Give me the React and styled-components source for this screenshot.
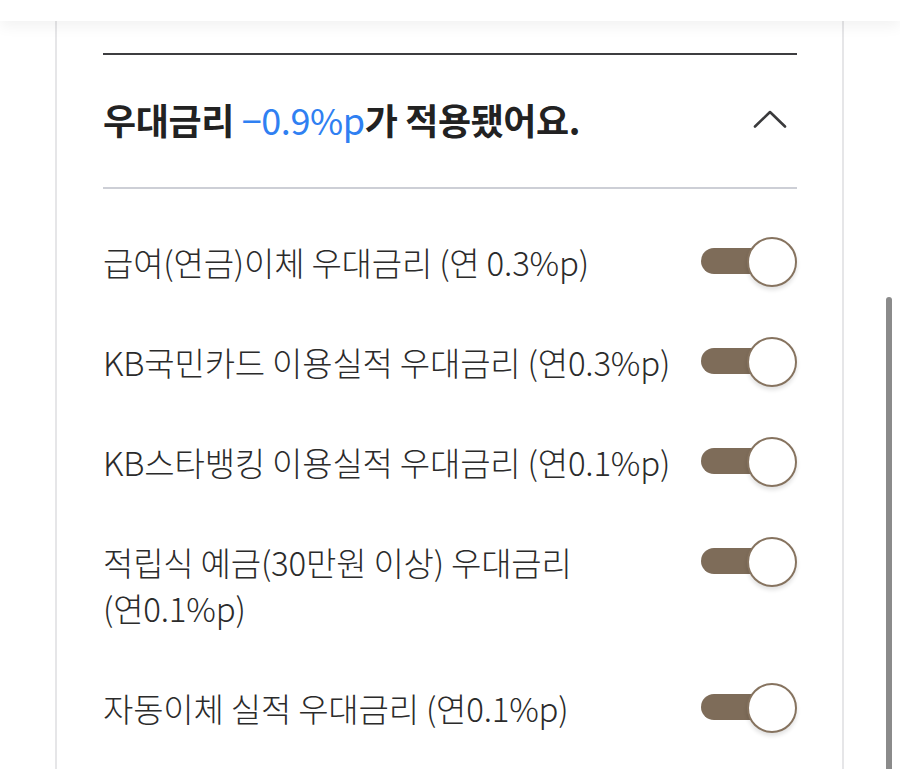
import React from "react";
import styled, { createGlobalStyle } from "styled-components";

const GlobalStyle = createGlobalStyle`
  html, body {
    margin: 0;
    padding: 0;
    background: #ffffff;
    overflow: hidden;
  }
  body {
    font-family: "Noto Sans CJK KR", "Noto Sans", sans-serif;
    color: #2a2a2a;
  }
`;

const TopBar = styled.header`
  position: relative;
  z-index: 2;
  height: 21px;
  background: #ffffff;
  box-shadow: 0 6px 14px rgba(0, 0, 0, 0.05);
`;

const Page = styled.main`
  display: flex;
  padding-left: 55px;
  padding-right: 56px;
  height: 748px;
`;

const Card = styled.section`
  flex: 1;
  border-left: 2px solid #e6e6e8;
  border-right: 2px solid #e6e6e8;
  background: #ffffff;
  padding: 32px 45px 0 46px;
  display: flex;
  flex-direction: column;
  & > * {
    flex: none;
  }
`;

const TopRule = styled.div`
  height: 2px;
  background: #3d3d40;
`;

const SummaryRow = styled.div`
  height: 134px;
  padding-bottom: 5px;
  display: flex;
  align-items: center;
  justify-content: space-between;
  border-bottom: 2px solid #cdcfd6;
  box-sizing: border-box;
`;

const SummaryTitle = styled.h2`
  margin: 0;
  font-size: 36px;
  font-weight: 700;
  color: #222222;
  letter-spacing: -0.4px;
`;

const Accent = styled.span`
  color: #2f80f2;
  font-weight: 400;
`;

const ChevronButton = styled.button`
  border: 0;
  background: none;
  padding: 0;
  margin-right: 9px;
  width: 36px;
  height: 24px;
  display: flex;
  align-items: center;
  justify-content: center;
`;

const List = styled.ul`
  list-style: none;
  margin: 0;
  padding: 50px 0 0;
  display: flex;
  flex-direction: column;
  gap: 54px;
`;

const Item = styled.li`
  display: flex;
  align-items: flex-start;
  justify-content: space-between;
  gap: 24px;
`;

const Label = styled.span`
  font-size: 33px;
  font-weight: 300;
  line-height: 46px;
  color: #2b2b2b;
  letter-spacing: -0.2px;
  word-break: keep-all;
  max-width: 580px;
`;

const Toggle = styled.button`
  position: relative;
  flex: none;
  width: 96px;
  height: 50px;
  margin: -2px 0;
  border: 0;
  padding: 0;
  background: none;
`;

const Track = styled.span`
  position: absolute;
  left: 0;
  top: 11px;
  width: 72px;
  height: 26px;
  border-radius: 13px;
  background: ${(p) => (p.$on ? "#7e6c59" : "#c9c9c9")};
`;

const Thumb = styled.span`
  position: absolute;
  top: 0;
  left: ${(p) => (p.$on ? "46px" : "0")};
  width: 50px;
  height: 50px;
  box-sizing: border-box;
  border-radius: 50%;
  background: #ffffff;
  border: 2px solid #86735f;
  box-shadow: 0 3px 4px rgba(0, 0, 0, 0.12);
`;

const ScrollIndicator = styled.div`
  position: fixed;
  right: 8px;
  top: 297px;
  width: 6px;
  height: 500px;
  border-radius: 3px;
  background: #8b8b8b;
`;

const items = [
  "급여(연금)이체 우대금리 (연 0.3%p)",
  "KB국민카드 이용실적 우대금리 (연0.3%p)",
  "KB스타뱅킹 이용실적 우대금리 (연0.1%p)",
  "적립식 예금(30만원 이상) 우대금리 (연0.1%p)",
  "자동이체 실적 우대금리 (연0.1%p)",
];

export default function App() {
  return (
    <>
      <GlobalStyle />
      <TopBar />
      <Page>
        <Card>
          <TopRule />
          <SummaryRow>
            <SummaryTitle>
              우대금리 <Accent>−0.9%p</Accent>가 적용됐어요.
            </SummaryTitle>
            <ChevronButton aria-label="접기">
              <svg width="34" height="20" viewBox="0 0 34 20">
                <path
                  d="M2 17.5 L17 3 L32 17.5"
                  fill="none"
                  stroke="#3a3a3c"
                  strokeWidth="2.6"
                  strokeLinecap="round"
                  strokeLinejoin="round"
                />
              </svg>
            </ChevronButton>
          </SummaryRow>
          <List>
            {items.map((t) => (
              <Item key={t}>
                <Label>{t}</Label>
                <Toggle aria-pressed="true">
                  <Track $on />
                  <Thumb $on />
                </Toggle>
              </Item>
            ))}
          </List>
        </Card>
      </Page>
      <ScrollIndicator />
    </>
  );
}
